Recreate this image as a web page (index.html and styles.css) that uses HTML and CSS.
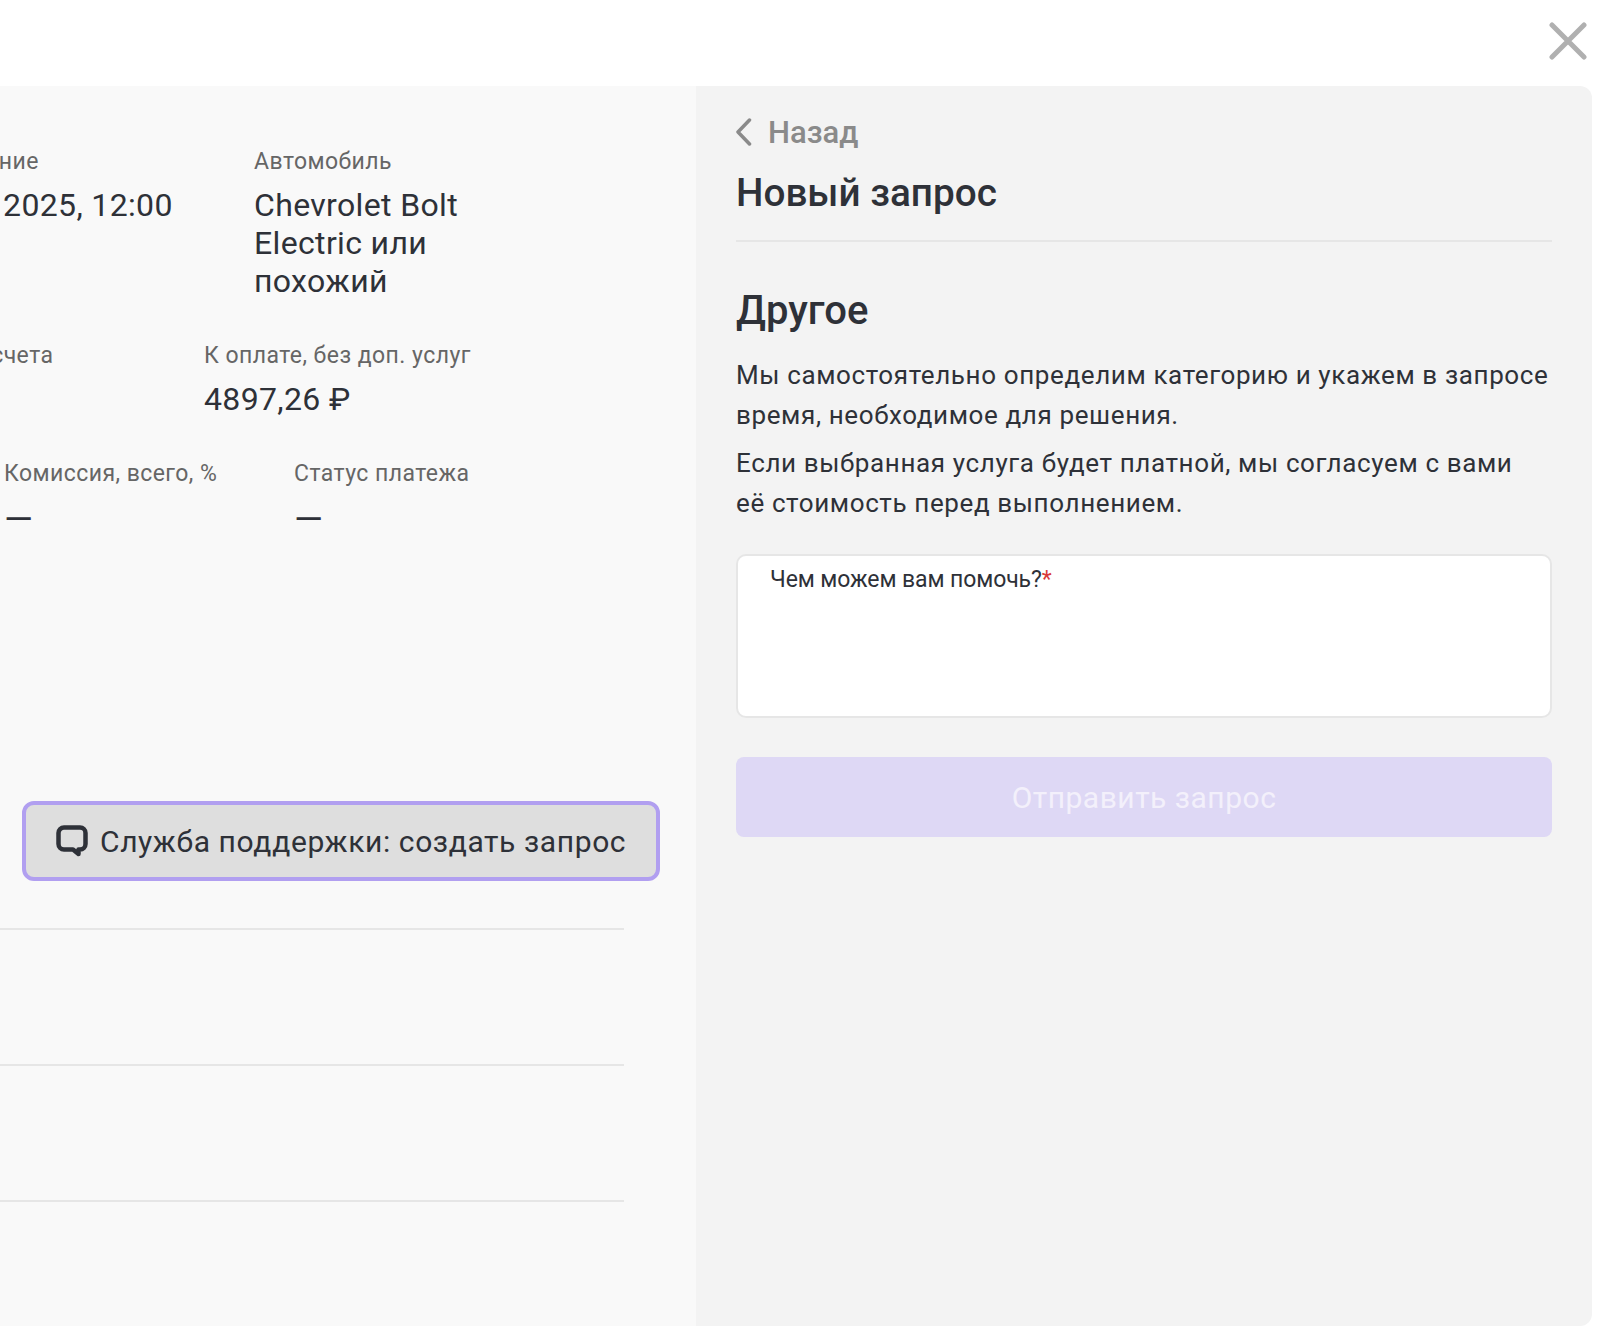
FILE: index.html
```html
<!DOCTYPE html>
<html lang="ru">
  <head>
    <meta charset="UTF-8" />
    <title>Новый запрос</title>
    <link rel="stylesheet" href="styles.css">
  </head>
  <body>
    <div class="top">
      <button class="close">
        <svg width="38" height="38" viewBox="0 0 38 38"><path d="M3 3L35 35M35 3L3 35" /></svg>
      </button>
    </div>
    <div class="modal">
      <!-- Детали брони -->
      <div class="details">
        <div class="row row-first">
          <div class="cell cell-date">
            <div class="label">Бронирование</div>
            <div class="value">2 марта 2025, 12:00</div>
          </div>
          <div class="cell cell-car">
            <div class="label">Автомобиль</div>
            <div class="value">Chevrolet Bolt Electric или похожий</div>
          </div>
        </div>
        <div class="row row-second">
          <div class="cell cell-currency">
            <div class="label">Валюта счета</div>
          </div>
          <div class="cell">
            <div class="label">К оплате, без доп. услуг</div>
            <div class="value">4897,26 ₽</div>
          </div>
        </div>
        <div class="row row-third">
          <div class="cell cell-fee">
            <div class="label">Комиссия, всего, %</div>
            <div class="value dash">—</div>
          </div>
          <div class="cell">
            <div class="label">Статус платежа</div>
            <div class="value dash">—</div>
          </div>
        </div>
        <button class="support">
          <svg width="32" height="32" viewBox="0 0 32 32"><path d="M8 2.5H24A5.500 5.500 0 0 1 29.500 8V19A5.500 5.500 0 0 1 24 24.500H22.500V29L17 24.500H8A5.500 5.500 0 0 1 2.500 19V8A5.500 5.500 0 0 1 8 2.500Z" /></svg>
          <span>Служба поддержки: создать запрос</span>
        </button>
        <div class="lines">
          <div class="line"></div>
          <div class="line"></div>
          <div class="line"></div>
        </div>
      </div>
      <!-- Форма запроса -->
      <div class="form">
        <div class="back">
          <svg width="18" height="28" viewBox="0 0 18 28"><path d="M13.500 2L2 14L13.500 26" /></svg>
          <span>Назад</span>
        </div>
        <div class="title">Новый запрос</div>
        <hr />
        <div class="title subtitle">Другое</div>
        <p class="text">Мы самостоятельно определим категорию и укажем в запросе время, необходимое для решения.</p>
        <p class="text">Если выбранная услуга будет платной, мы согласуем с вами<br />её стоимость перед выполнением.</p>
        <div class="field">Чем можем вам помочь?<span class="req">*</span></div>
        <button class="send">Отправить запрос</button>
      </div>
    </div>
  </body>
</html>
```

FILE: styles.css
```css
body {
  margin: 0;
  height: 1338px;
  overflow: hidden;
  background: #fff;
  color: #2e3138;
  font-family: Roboto, 'Noto Sans', sans-serif;
}
button {
  font-family: inherit;
  cursor: pointer;
}
.top {
  height: 86px;
  display: flex;
  justify-content: flex-end;
  padding: 22px 29px 0 0;
  box-sizing: border-box;
}
.close {
  border: none;
  background: none;
  padding: 0;
  width: 38px;
  height: 38px;
}
.close path {
  fill: none;
  stroke: #b0b0b0;
  stroke-width: 5;
  stroke-linecap: round;
}
.modal {
  display: flex;
  height: 1240px;
  margin-right: 24px;
}
.details {
  width: 696px;
  flex-shrink: 0;
  background: #f9f9f9;
  overflow: hidden;
}
.row {
  display: flex;
}
.row-first {
  margin: 61px 0 0 -124px;
  height: 194px;
}
.row-second {
  margin: 0 0 0 -100px;
  height: 118px;
}
.row-third {
  margin: 0 0 0 4px;
  height: 342px;
}
.cell-date {
  width: 378px;
}
.cell-car {
  width: 225px;
}
.cell-currency {
  width: 304px;
}
.cell-fee {
  width: 290px;
}
.label {
  font-size: 23px;
  line-height: 30px;
  letter-spacing: 0.45px;
  color: #666;
  white-space: nowrap;
}
.value {
  font-size: 32px;
  line-height: 38px;
  letter-spacing: 0.35px;
  margin-top: 9px;
}
.dash {
  font-size: 37px;
  margin-top: 12px;
}
.support {
  display: flex;
  align-items: center;
  gap: 12px;
  margin-left: 22px;
  width: 638px;
  height: 80px;
  padding: 0 0 0 30px;
  box-sizing: border-box;
  background: #dedede;
  border: 4px solid #b19ff0;
  border-radius: 12px;
  color: #2e3138;
  font-size: 30px;
  letter-spacing: 0.6px;
}
.support svg {
  flex-shrink: 0;
}
.support path {
  fill: none;
  stroke: #2e3138;
  stroke-width: 4.500;
  stroke-linejoin: round;
}
.lines {
  margin: 47px 72px 0 0;
}
.line {
  height: 2px;
  background: #e6e6e6;
  margin-bottom: 134px;
}
.form {
  flex: 1;
  background: #f3f3f3;
  padding: 29px 40px 0;
  border-radius: 0 12px 12px 0;
}
.back {
  display: flex;
  align-items: center;
  gap: 14px;
  height: 34px;
  color: #8a8a8a;
  font-size: 31px;
  font-weight: 500;
}
.back path {
  fill: none;
  stroke: #8a8a8a;
  stroke-width: 3.500;
  stroke-linecap: round;
  stroke-linejoin: round;
}
.title {
  font-size: 38.700px;
  font-weight: 500;
  line-height: 46px;
  margin-top: 21px;
}
hr {
  border: none;
  border-top: 2px solid #e6e6e6;
  margin: 24px 0 0;
}
.subtitle {
  margin-top: 46px;
  font-size: 40px;
}
.text {
  margin: 8px 0 0;
  font-size: 26px;
  line-height: 40px;
  letter-spacing: 0.62px;
}
.subtitle + .text {
  margin-top: 21px;
}
.field {
  margin-top: 31px;
  height: 164px;
  box-sizing: border-box;
  padding: 9px 32px;
  background: #fff;
  border: 2px solid #e6e6e6;
  border-radius: 10px;
  font-size: 23px;
  line-height: 30px;
  letter-spacing: -0.1px;
}
.req {
  color: #d93a3a;
}
.send {
  display: block;
  width: 100%;
  height: 80px;
  margin-top: 39px;
  border: none;
  border-radius: 8px;
  background: #ded8f5;
  color: #f3f0fb;
  font-size: 30px;
  letter-spacing: 0.5px;
}
```
